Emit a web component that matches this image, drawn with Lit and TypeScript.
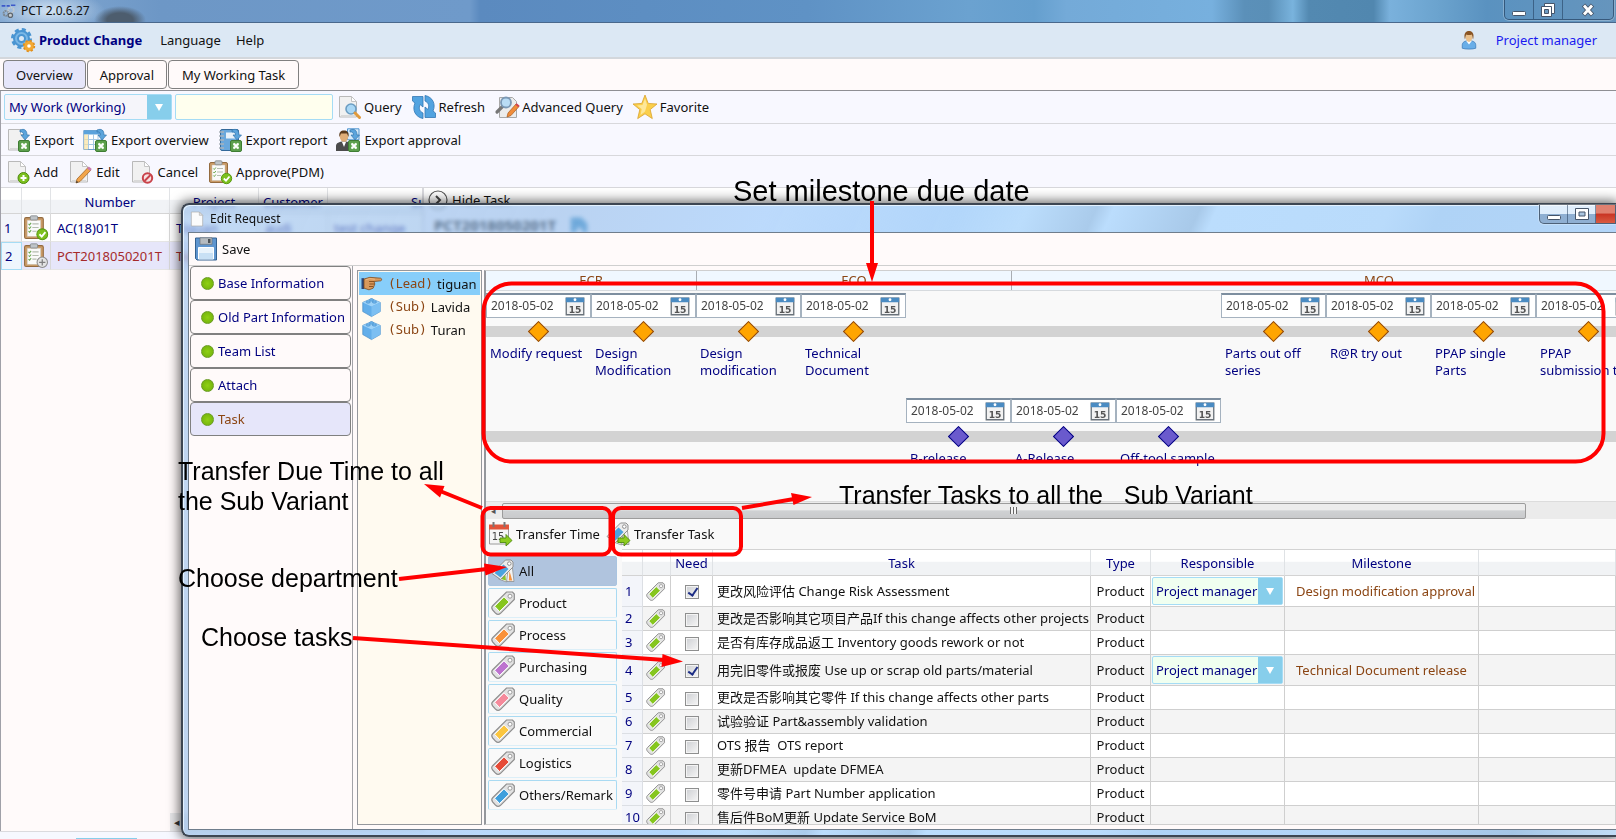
import { LitElement, html, svg, css, nothing } from "lit";
import { customElement, property } from "lit/decorators.js";
import { classMap } from "lit/directives/class-map.js";

const sheet = svg`<path d="M2.500 1.500h12l5 5v15.500h-17z" fill="#f1f1f1" stroke="#b9b9b9"/><path d="M14.500 1.500v5h5z" fill="#fff" stroke="#c4c4c4"/><path d="M4 21h14" stroke="#d9d9d9" stroke-width="2"/>`;
const excel = svg`<rect x="12.500" y="12.500" width="11" height="11" rx="1.500" fill="#5c9f4c" stroke="#3f7d33"/><path d="M15 15h6v6h-6z" fill="#82bd70"/><path d="M15.500 15.500l5 5M20.500 15.500l-5 5" stroke="#fff" stroke-width="1.800"/>`;
const swoop = svg`<path d="M14 2c5-2 7 1 7 5h2.500l-4.500 5-4-5h2.500c0-2-1-3.500-3.500-3z" fill="#5ba4dc" stroke="#3576ad" stroke-width=".7"/>`;
const board = svg`<rect x="1.500" y="2.500" width="18" height="20" rx="1.500" fill="#c99a66" stroke="#946b3f"/><rect x="4" y="5" width="13" height="15.500" fill="#fafafa" stroke="#c9c0b0" stroke-width=".5"/><rect x="7" y=".8" width="7" height="4" rx="1" fill="#bfc4c8" stroke="#84898d" stroke-width=".8"/><path d="M9 8.500h6M9 12h6M9 15.500h4" stroke="#b5bcb0"/><path d="M5.300 8.500l1 1 1.500-2M5.300 12l1 1 1.500-2M5.300 15.500l1 1 1.500-2" fill="none" stroke="#6aa84f"/>`;
const arrowGo = svg`<path d="M12 16h6v-3.500l6 6-6 5.500v-3.500h-6z" fill="#8ccb1f" stroke="#4e8a10" stroke-width=".9"/>`;
const fan = svg`<path d="M17 4l4 1 2 17.500h-7l-3-10z" fill="#f3f3f3" stroke="#8f8f8f" stroke-width=".8"/><path d="M18.500 12l2.800 9.500h-3.500z" fill="#f59342"/><path d="M14 8l3 3-1.500 12-8-3z" fill="#f3f3f3" stroke="#8f8f8f" stroke-width=".8"/><path d="M14 13l1 8.500-5-1.500z" fill="#8ac426"/><path d="M14.500 1H20l2 2v5L9.500 20.500 1 14.500z" fill="#ececec" stroke="#8f8f8f"/><path d="M12.500 5.500l5 4.500-8 8.500-6-4.500z" fill="#4ba3df"/><circle cx="18.300" cy="4.600" r="1.800" fill="#fff" stroke="#8f8f8f"/>`;

const tag = (c: string) => svg`<path d="M15.500 1h6l1.800 2v5.500L9.500 22.300c-1.500 1.300-3.500 1.200-4.800 0L1.700 19c-1.100-1.300-1.200-3 0-4.300z" fill="#e2e2e2" stroke="#8e8e8e" stroke-width="1.200"/><path d="M13 5.800l5.200 5.200L8.500 20.500 3.600 15.300z" fill=${c} stroke="#fff" stroke-width="1"/><circle cx="19" cy="5.200" r="2" fill="#fff" stroke="#9a9a9a"/>`;

const ICONS: Record<string, unknown> = {
  gears: svg`<circle cx="10.500" cy="10.500" r="5.500" fill="none" stroke="#4a95d2" stroke-width="6"/><circle cx="10.500" cy="10.500" r="9" fill="none" stroke="#4a95d2" stroke-width="3" stroke-dasharray="4 3.070"/><circle cx="10.500" cy="10.500" r="5.500" fill="none" stroke="#7ab7e6" stroke-width="2"/><circle cx="18" cy="18" r="3.500" fill="#fff" stroke="#f3a933" stroke-width="3.400"/><circle cx="18" cy="18" r="5.400" fill="none" stroke="#e08e1b" stroke-width="1.600" stroke-dasharray="2.200 2.040"/>`,
  app: svg`<circle cx="8" cy="15" r="4" fill="none" stroke="#7d8790" stroke-width="3" stroke-dasharray="3 1"/><circle cx="16" cy="10" r="4.500" fill="none" stroke="#c2c8ce" stroke-width="3" stroke-dasharray="3 1"/><circle cx="15" cy="18" r="3.500" fill="#c7ccd1" stroke="#5d666e" stroke-width="2"/><path d="M1 3h6M9 3h5M16 2h7" stroke="#3d59c9" stroke-width="2.500"/>`,
  user: svg`<path d="M3 23v-4c0-4 3-6 9-6s9 2 9 6v4c-4 1.500-14 1.500-18 0z" fill="#69aee8" stroke="#3b7ab8"/><path d="M8 13l4 5 4-5z" fill="#fff"/><ellipse cx="12" cy="8" rx="4.500" ry="6.500" fill="#e9c08c"/><path d="M6.500 11C4.500 3 8 0 12 0s7.500 3 5.500 11c-1-1-.5-5-2-6.500-2 1-5 1-7 0-1.500 1.500-1 5.500-2 6.500z" fill="#8a5524"/>`,
  query: svg`${sheet}<circle cx="14" cy="14" r="5" fill="#a9d7f5" stroke="#6b9dc2" stroke-width="1.600"/><path d="M18 18l4.500 4.500" stroke="#e09a3c" stroke-width="3" stroke-linecap="round"/>`,
  refresh: svg`<path d="M11 23.500C3 22 0 14.500 3 8L.5 6V1.500H11V12L8 9.500C6.500 13 7.500 16.500 11 18z" fill="#52a3e0" stroke="#3277b4" stroke-width=".8"/><path d="M13 .5c8 1.500 11 9 8 15.500l2.500 2v4.500H13V12l3 2.500c1.500-3.500.5-7-3-8.500z" fill="#52a3e0" stroke="#3277b4" stroke-width=".8"/>`,
  advanced: svg`<path d="M4.500 2.500h13l4 4v16h-17z" fill="#ececec" stroke="#a8a8a8"/><path d="M8 11L2 17" stroke="#777" stroke-width="3.200" stroke-linecap="round"/><circle cx="11" cy="7.500" r="5" fill="#b9dcf5" stroke="#7b98b5" stroke-width="1.800"/><path d="M12 22l1-4 8-9 3 2.500-8 9z" fill="#f08c3a" stroke="#a85a1c" stroke-width=".7"/><path d="M21 9l3 2.500" stroke="#d2434f" stroke-width="2"/>`,
  star: svg`<path d="M12 0l3.200 8.400 8.800.6-6.800 5.600 2.100 9L12 18.800l-7.300 4.800 2.100-9L0 9l8.800-.6z" fill="#fbcf4b" stroke="#d9a22d" stroke-width=".8"/><path d="M12 3.500l2 6.200-2 6.800-4.500 3.400 1.200-6L4 10.500l5.500-.5z" fill="#fde79a"/>`,
  export: svg`${sheet}${swoop}${excel}`,
  exportOverview: svg`<path d="M.8 2.500h19v19H.8z" fill="#fff" stroke="#6f9fc9"/><path d="M.8 2.500h19v4H.8z" fill="#5aa2dc"/><path d="M1 11.500h18M1 16.500h18M5.500 6v15M10.500 6v15M15 6v15" stroke="#a6c8e4"/><path d="M1 6.500h4v15H1z" fill="#f9e3a1" opacity=".7"/>${swoop}${excel}`,
  exportReport: svg`<rect x="2.500" y="1.500" width="18" height="21" rx="1.500" fill="#6aa8dc" stroke="#34699a"/><path d="M8 4.500h10v6H8z" fill="#e9f2fa"/><path d="M1 4h5M1 8h5M1 12h5M1 16h5M1 20h5" stroke="#aab2ba" stroke-width="1.600"/>${swoop}${excel}`,
  exportApproval: svg`<path d="M11.500 .8h11.500v11H11.500z" fill="#d7ebfa" stroke="#4f94cf"/><path d="M0 23v-5c0-3 3-4.500 8-4.500s8 1.500 8 4.500v5z" fill="#4c4c4c"/><path d="M6 14l2 5 2-5z" fill="#fff"/><ellipse cx="8" cy="8.500" rx="4.200" ry="5.200" fill="#e0ae78"/><path d="M3.500 9C2.500 4 5 2.500 8 2.500S13.500 4 12.500 9l-1.500-3.500H5z" fill="#5a3a1c"/>${swoop}${excel}`,
  add: svg`${sheet}<circle cx="17.500" cy="18" r="5.500" fill="#7cc01e" stroke="#4f8a0f"/><path d="M17.500 15v6M14.500 18h6" stroke="#fff" stroke-width="2"/>`,
  edit: svg`${sheet}<path d="M8 23l1-4L20 7.500l3 2.500L12 21.500z" fill="#f2a54a" stroke="#a2672a" stroke-width=".8"/><path d="M20 7.500l3 2.500" stroke="#c77bb0" stroke-width="2.500"/><path d="M8 23l.7-2.300 1.600 1.500z" fill="#333"/>`,
  cancel: svg`${sheet}<circle cx="17.500" cy="18" r="4.700" fill="#f7e3e3" stroke="#c9434b" stroke-width="2"/><path d="M14.500 21l6-6" stroke="#c9434b" stroke-width="2"/>`,
  approve: svg`${board}<circle cx="18.500" cy="18.500" r="5.200" fill="#7cc01e" stroke="#5a9a12"/><path d="M15.800 18.500l2.200 2.200 3.500-4.200" fill="none" stroke="#fff" stroke-width="1.800"/>`,
  pending: svg`${board}<circle cx="18.500" cy="18.500" r="5" fill="#e4e4e4" stroke="#8c8c8c"/><path d="M18.500 15.500v6M15.500 18.500h6" stroke="#7f7f7f" stroke-width="1.200"/>`,
  page: svg`<path d="M3.500 1.500h12l5 5v16h-17z" fill="#fbfbfb" stroke="#a9a9a9"/><path d="M15.500 1.500v5h5z" fill="#e4e4e4" stroke="#b0b0b0"/>`,
  save: svg`<path d="M2 1h20.500v22H3l-1.500-1.500V1z" fill="#5f95cf" stroke="#35618f"/><path d="M6 .8h12v6.500H6z" fill="#b6bbc0" stroke="#6f7479" stroke-width=".7"/><path d="M14 2h2.500v4H14z" fill="#4d5257"/><path d="M4.500 10.500h15V22h-15z" fill="#e9f3fc" stroke="#fff"/><path d="M5 16h14v6H5z" fill="#c8e0f5"/>`,
  truck: svg`<path d="M1 2h14l8 8v12h-7v-6H9v6H1z" fill="#3d8fc4"/>`,
  hand: svg`<path d="M0 5l3 0v13H0z" fill="#2d4778"/><path d="M3 6l7-2 13 1c1.500.2 1.500 3 0 3.200L15 9l1 3-2 5-5 2-6-2z" fill="#d9995c" stroke="#7a4517" stroke-width=".9"/><path d="M9 9h6M9.500 12h6M9 15h5" stroke="#7a4517"/><path d="M5 7l5-1.500 6 .8" stroke="#efc08d" fill="none"/>`,
  brick: svg`<path d="M12 2l10.500 4.500v11L12 23.500 1.500 17.500v-11z" fill="#62aeea" stroke="#4188c4" stroke-width=".8"/><path d="M12 2l10.500 4.500L12 11.500 1.500 6.500z" fill="#9ed2f8"/><path d="M12 11.500l10.500-5v11L12 23.500z" fill="#7cbff2"/><ellipse cx="8" cy="6" rx="2.600" ry="1.500" fill="#6db4ec" stroke="#4188c4" stroke-width=".6"/><ellipse cx="15.500" cy="6" rx="2.600" ry="1.500" fill="#6db4ec" stroke="#4188c4" stroke-width=".6"/><ellipse cx="12" cy="3.500" rx="2.600" ry="1.500" fill="#6db4ec" stroke="#4188c4" stroke-width=".6"/>`,
  calendar: svg`<path d="M1.500 2.500h21v20h-21z" fill="#f2f2f2" stroke="#6a727a" stroke-width="1.600"/><path d="M1 2h22v5.500H1z" fill="#4a8bc2"/><circle cx="12" cy="4.500" r="1.700" fill="#fff"/><text x="12" y="20" text-anchor="middle" font-family="DejaVu Sans" font-weight="700" font-size="11" fill="#555">15</text>`,
  transferTime: svg`<path d="M1.500 3.500h19v18.500h-19z" fill="#f5f5f5" stroke="#9a9a9a"/><path d="M1 2.500h20v5H1z" fill="#e2543a"/><path d="M5.500 0v5M16.500 0v5" stroke="#777" stroke-width="2"/><text x="10" y="18" text-anchor="middle" font-family="DejaVu Sans" font-size="10" fill="#444">15</text>${arrowGo}`,
  transferTask: svg`${fan}${arrowGo}`,
  fan,
  green: tag("#86c61f"),
  orange: tag("#f9913a"),
  purple: tag("#bd73cf"),
  pink: tag("#f58a9b"),
  yellow: tag("#fbc640"),
  red: tag("#e64b37"),
  blue: tag("#3f9fdc"),
};

@customElement("pct-icon")
export class PctIcon extends LitElement {
  @property() name = "page";
  static styles = css`
    :host { display: inline-block; flex: none; width: 24px; height: 24px; }
    svg { display: block; width: 100%; height: 100%; overflow: visible; }
  `;
  render() {
    return html`<svg viewBox="0 0 24 24" aria-hidden="true">${ICONS[this.name]}</svg>`;
  }
}

interface Milestone { title: string; col: number; }
const RELEASES: Milestone[] = [
  { title: "Modify request", col: 0 },
  { title: "Design Modification", col: 1 },
  { title: "Design modification", col: 2 },
  { title: "Technical Document", col: 3 },
  { title: "Parts out off series", col: 7 },
  { title: "R@R try out", col: 8 },
  { title: "PPAP single Parts", col: 9 },
  { title: "PPAP submission to", col: 10 },
];
const GATES: Milestone[] = [
  { title: "B-release", col: 4 },
  { title: "A-Release", col: 5 },
  { title: "Off-tool sample", col: 6 },
];
const COLUMNS = 14;

const TASKS: { text: string; owner?: string; milestone?: string }[] = [
  { text: "更改风险评估 Change Risk Assessment", owner: "Project manager", milestone: "Design modification approval" },
  { text: "更改是否影响其它项目产品If this change affects other projects" },
  { text: "是否有库存成品返工 Inventory goods rework or not" },
  { text: "用完旧零件或报废 Use up or scrap old parts/material", owner: "Project manager", milestone: "Technical Document release" },
  { text: "更改是否影响其它零件 If this change affects other parts" },
  { text: "试验验证 Part&assembly validation" },
  { text: "OTS 报告  OTS report" },
  { text: "更新DFMEA  update DFMEA" },
  { text: "零件号申请 Part Number application" },
  { text: "售后件BoM更新 Update Service BoM" },
];

const DEPARTMENTS: [string, string][] = [
  ["fan", "All"], ["green", "Product"], ["orange", "Process"], ["purple", "Purchasing"],
  ["pink", "Quality"], ["yellow", "Commercial"], ["red", "Logistics"], ["blue", "Others/Remark"],
];

@customElement("app-root")
export class AppRoot extends LitElement {
  static styles = css`
    :host {
      display: block; position: relative; height: 100vh; overflow: hidden;
      font: 13px/18px "Noto Sans", "Noto Sans CJK SC", sans-serif; color: #111;
    }
    * { box-sizing: border-box; }
    button, input, select { font: inherit; color: inherit; margin: 0; padding: 0; background: none; border: 0; outline: 0; border-radius: 0; }
    button { cursor: pointer; text-align: left; white-space: nowrap; }
    a { text-decoration: none; }
    table { border-collapse: separate; border-spacing: 0; table-layout: fixed; }
    th { font-weight: 400; }

    .shell { display: flex; flex-direction: column; height: 100%; background: #fffafa; }
    .titlebar {
      flex: none; display: flex; align-items: center; gap: 5px; height: 23px; padding-left: 1px;
      border-bottom: 1px solid #49688c; font-size: 12px;
      background:
        radial-gradient(ellipse 55px 20px at 50px 11px, rgba(225, 238, 250, .85), rgba(225, 238, 250, 0)),
        radial-gradient(ellipse 26px 14px at 120px 20px, #4d5d6e 50%, rgba(60, 83, 108, 0)),
        linear-gradient(90deg, #86abd3 0, #6d97c6 160px, #6f9aca 470px, #5b8abf 480px, #5f92c5 50%, #6ba2d0 60%, #659fce 64%, #74aad8 66%, #77b0de 75%, #5b90b9 77%, #5a8fb7 78.500%, #79b3dd 80%, #5389b1 81%, #5187af 85%, #7ab1dc 86%, #6ba3ce 89%, #5a92c0 92%, #6695bd 100%);
    }
    .titlebar pct-icon { width: 15px; height: 15px; }
    .grow { flex: 1; }
    .winbtns { display: flex; align-self: flex-start; height: 20px; margin-right: 2px; border: 1px solid rgba(25, 50, 80, .6); border-top: 0; border-radius: 0 0 5px 5px; box-shadow: 0 0 0 1px rgba(255, 255, 255, .25); }
    .winbtns button { display: grid; place-items: center; width: 29px; border-right: 1px solid rgba(25, 50, 80, .5); }
    .winbtns button:last-child { width: 50px; border-right: 0; }
    .winbtns svg { display: block; width: 16px; height: 14px; }

    .menubar { flex: none; display: flex; align-items: center; height: 36px; padding: 0 19px 0 11px; background: #dce8f4; border-bottom: 2px solid #d3d7dc; }
    .menubar button { margin-right: 15px; }
    .menubar .brand { display: flex; align-items: center; gap: 4px; margin-right: 18px; font-weight: 700; color: #000080; }
    .menubar .who { width: 18px; height: 18px; margin-right: 18px; }
    .menubar a { color: #1a1af0; }

    .tabs { flex: none; display: flex; gap: 1px; height: 32px; padding: 1px 3px 0; border-bottom: 1px solid #8f8f94; }
    .tabs button { height: 29px; padding: 0 12px; border: 1px solid #808080; border-radius: 4px; background: #fffafa; }
    .tabs button:last-child { padding: 0 13px; }
    .tabs .on { background: #e6e6fa; }

    .work { flex: 1; min-height: 0; display: flex; flex-direction: column; border-left: 1px solid #a0a0a8; }
    .toolbar { flex: none; display: flex; align-items: center; gap: 9px; height: 32px; padding: 0 5px; background: #f8f8ff; border-bottom: 1px solid #d8d8dc; }
    .toolbar.search { height: 33px; padding-left: 3px; gap: 10px; }
    .toolbar.edit { gap: 10px; }
    .tool { display: flex; align-items: center; gap: 4px; }
    .combo { display: flex; height: 26px; border: 1px solid #a5dcf5; border-radius: 2px; background: #f5f5fa; color: #000080; }
    .combo select { flex: 1; min-width: 0; padding-left: 4px; appearance: none; }
    .combo i { flex: none; width: 24px; display: grid; place-items: center; background: #87ceeb; }
    .combo i::before { content: ""; border: 4px solid transparent; border-top: 7px solid #fff; border-bottom: 0; }
    .fields { display: flex; gap: 3px; }
    .search .combo { width: 168px; }
    .search input { width: 158px; height: 26px; padding: 0 4px; border: 1px solid #a5dcf5; border-radius: 2px; background: #ffffee; }
    .search .tool { gap: 3px; }
    .fields + .tool { margin-left: -6px; }

    .split { flex: 1; min-height: 0; display: flex; }
    .requests { flex: none; width: 423px; display: flex; flex-direction: column; overflow: hidden; border-right: 2px solid #d9d9de; }
    .requests table { width: 539px; color: #000080; }
    .requests th { height: 26px; padding: 2px 0 0; background: linear-gradient(#fff 45%, #f1f3f6 50%); border-right: 1px solid #e1e3e6; border-bottom: 1px solid #d5d5d5; }
    .requests td { height: 28px; padding: 0 6px; background: #fff; border-right: 1px solid #d9d9d9; border-bottom: 1px solid #e5e5e5; white-space: nowrap; overflow: hidden; }
    .requests td:first-child { padding: 0 3px; background: #f3f5fa; }
    .requests td:nth-child(2) { padding: 0 0 0 1px; }
    .requests pct-icon { display: block; width: 25px; height: 25px; }
    .requests .sel td { background: #e6e6fa; color: #a52a2a; }
    .requests .sel td:first-child { background: #eef6fd; color: #000080; border: 1px solid #a5dcf5; }
    .hbar { margin: auto 0 0 169px; height: 18px; padding-left: 4px; background: #e8e8ea; color: #333; font-size: 11px; line-height: 17px; }
    .detail { flex: 1; background: linear-gradient(#fff 15px, #f8f8ff 15px); }
    .hide { display: flex; align-items: center; gap: 4px; height: 24px; padding-left: 4px; }
    .hide svg { width: 20px; height: 20px; }
    .detail .head { display: flex; align-items: center; gap: 12px; padding: 4px 10px; font-size: 15px; font-weight: 700; color: #000; }
    .detail .head pct-icon { width: 22px; height: 18px; }
    .status { flex: none; height: 8px; padding-top: 6px; background: #f6f8ff; border-top: 1px solid #dadade; }
    .status div { width: 61px; height: 1px; margin-left: 76px; background: #87ceeb; }

    .dialog {
      position: absolute; left: 181px; top: 203px; right: 0; bottom: 2px; display: flex; flex-direction: column;
      padding: 0 0 5px 5px; border: 2px solid #3d4652; border-right: 0; border-radius: 8px 0 0 8px;
      background: linear-gradient(115deg, rgba(160, 196, 238, .65) 0, rgba(145, 186, 232, .6) 22%, rgba(148, 198, 250, .6) 34%, rgba(170, 210, 250, .9) 45%, #bbddfc 49%, #aacbeb 53%, #bbddfd 54%, #a8c9e9 59%, #bbddfd 60%, #b9dbfb 70%, #afd3f6 73%, #b3d5f8 84%, #a5c6e6 94%, #c2ddf6 100%);
      backdrop-filter: blur(2px);
      box-shadow: 0 0 12px 2px rgba(0, 0, 0, .6), inset 1px 1px 0 #e4f2ff;
    }
    .dialog > header { flex: none; display: flex; align-items: center; gap: 5px; height: 27px; font-size: 12px; }
    .dialog > header pct-icon { width: 16px; height: 16px; margin-left: 1px; }
    .dialog .winbtns { height: 19px; margin-right: 0; border-color: #4d6178; background: linear-gradient(rgba(255, 255, 255, .6) 50%, rgba(120, 150, 185, .6) 50%); border-radius: 0 0 0 5px; }
    .dialog .winbtns button { width: 28px; }
    .dialog .winbtns .close { width: 19px; background: linear-gradient(#e0806f 45%, #c93423 50%, #d95b42); }
    .content { flex: 1; min-height: 0; display: flex; flex-direction: column; border: 1px solid #6f7d8c; border-right: 0; background: #fffafa; }
    .savebar { flex: none; height: 33px; padding: 0 5px; display: flex; align-items: center; border-bottom: 1px solid #cfcfcf; }
    .panes { flex: 1; min-height: 0; display: flex; }
    .nav { flex: none; width: 164px; padding: 0 1px; display: flex; flex-direction: column; border-right: 1px solid #a3a3a8; }
    .nav button { display: flex; align-items: center; gap: 4px; height: 34px; padding-left: 10px; color: #000080; border: 1px solid #808080; border-radius: 4px; }
    .nav button::before { content: ""; width: 11px; height: 11px; border-radius: 50%; background: radial-gradient(#8fd014, #6fae0c); border: 1px solid #6a9c25; }
    .nav .on { background: #e6e6fa; color: #8b4513; }
    .variants { flex: none; width: 125px; margin: 4px 0 4px 4px; padding: 1px; border: 1px solid #95979c; background: #fffaf0; }
    .variants button { display: flex; align-items: center; width: 100%; height: 23px; padding-left: 2px; }
    .variants .on { background: #87cefa; }
    .variants pct-icon { width: 21px; height: 20px; margin-right: 6px; }
    .variants em { font-style: normal; color: #8b4513; margin-right: 4px; font-family: "DejaVu Sans Mono"; }
    .variants em span { font-family: "Noto Sans"; }

    .main { flex: 1; min-width: 0; margin: 4px 0 4px 2px; display: flex; flex-direction: column; border: 1px solid #cfcfcf; border-left: 2px solid #95979c; border-right: 0; background: #f9f9f9; }
    .phases { flex: none; display: grid; grid-template-columns: 210px 315px 735px; height: 20px; overflow: hidden; background: #f0f8ff; color: #8b4513; text-align: center; border-bottom: 1px solid #d6dade; line-height: 19px; }
    .phases div + div { border-left: 1px solid #a9adb2; }
    .timeline { flex: none; height: 210px; padding-top: 2px; overflow: hidden; }
    .lane { display: grid; grid-template-columns: repeat(14, 105px); height: 105px; }
    .stop { display: grid; grid-template-columns: minmax(0, 1fr); grid-template-rows: 25px 21px auto; row-gap: 3px; align-content: start; }
    .date { display: flex; align-items: center; border: 1px solid #a5b2bf; border-top: 2px solid #7d8e9f; background: #fff; padding: 0 5px 0 4px; color: #444; font-size: 12px; }
    .date input { flex: 1; min-width: 0; }
    .date button, .date pct-icon { display: block; width: 20px; height: 20px; }
    .track { grid-row: 2; display: grid; place-items: center; background: linear-gradient(transparent 5px, #d3d3d3 5px, #d3d3d3 16px, transparent 16px); }
    .track i { width: 15px; height: 15px; rotate: 45deg; background: #ffa500; border: 1px solid #8b4513; }
    .gate .track i { background: #6a5acd; border-color: #000080; }
    .stop label { padding-left: 4px; line-height: 17px; color: #000080; }
    .scroll { flex: none; display: flex; align-items: center; height: 18px; padding-left: 5px; background: #ebebeb; border-top: 1px solid #dcdcdc; font-size: 9px; color: #555; }
    .scroll div { width: 91%; height: 16px; margin-left: 6px; display: grid; place-items: center; border: 1px solid #9c9c9c; border-radius: 2px; background: linear-gradient(#ececec 40%, #cfd1d3 50%, #c9cacc); }
    .scroll b { width: 7px; height: 7px; background: repeating-linear-gradient(90deg, #666 0 1px, #f4f4f4 1px 3px); }
    .transfer { flex: none; display: flex; align-items: center; gap: 6px; height: 30px; padding-left: 2px; }

    .lower { flex: 1; min-height: 0; display: flex; gap: 5px; overflow: hidden; }
    .depts { flex: none; width: 131px; padding: 7px 0 0 2px; display: flex; flex-direction: column; gap: 2px; }
    .depts button { display: flex; align-items: center; gap: 4px; height: 30px; padding-left: 2px; border: 1px solid #a9daf2; border-bottom-color: #dceff8; border-radius: 2px; }
    .depts .on { background: #b0c4de; border-color: #a9c4e0; }
    .grid { flex: 1; min-width: 0; overflow: hidden; border-top: 1px solid #d3d3d3; }
    .grid table { width: 100%; }
    .grid th { height: 26px; color: #000080; background: linear-gradient(#fff 45%, #f1f3f5 50%); border-right: 1px solid #dfe2e5; border-bottom: 1px solid #d3d3d3; padding: 0; }
    .grid td { height: 24px; padding: 0 0 0 4px; white-space: pre; border-right: 1px solid #cfcfcf; border-bottom: 1px solid #cfcfcf; background: #fff; overflow: hidden; line-height: 17px; }
    .grid tr:nth-child(even) td { background: #f4f4f4; }
    .grid .tall td { height: 31px; }
    .grid tr td:first-child { color: #000080; background: #f3f5fa; padding-left: 3px; border-color: #dcdfe4; }
    .grid td:nth-child(2) { padding-left: 3px; }
    .grid td:nth-child(2) pct-icon { display: block; width: 19px; height: 19px; }
    .grid td:nth-child(3) { padding: 0; text-align: center; }
    .grid td:nth-child(5) { padding: 0; text-align: center; }
    .grid td:nth-child(6) { padding: 0 1px; }
    .grid td:nth-child(7) { padding-left: 11px; color: #8b4513; }
    .grid .combo { background: #f0fff0; height: 28px; }
    .grid .combo select { padding-left: 3px; }
    .grid input { appearance: none; display: inline-block; vertical-align: middle; width: 14px; height: 14px; border: 1px solid #8e8f8f; background: linear-gradient(135deg, #cdcfd3, #f6f6f6); box-shadow: inset 0 0 0 1px #f4f4f4; }
    .grid input:checked::after { content: ""; display: block; width: 4px; height: 8px; margin: 0 0 0 4px; border: solid #1c2d85; border-width: 0 2px 2px 0; transform: rotate(35deg); }

    .notes { position: absolute; inset: 0; pointer-events: none; overflow: hidden; }
    .notes svg { width: 100%; height: 100%; display: block; }
    .notes p { position: absolute; margin: 0; white-space: pre; color: #000; font: 25px/30px "Liberation Sans", sans-serif; }
    .notes .n1 { left: 733px; top: 176px; font-size: 29px; }
    .notes .n2 { left: 178px; top: 456px; }
    .notes .n3 { left: 839px; top: 480px; }
    .notes .n4 { left: 178px; top: 563px; }
    .notes .n5 { left: 201px; top: 622px; }
  `;

  private tool(icon: string, text: string) {
    return html`<button class="tool"><pct-icon name=${icon}></pct-icon>${text}</button>`;
  }

  private minGlyph = svg`<rect x="1.500" y="8.500" width="13" height="4" rx="1" fill="#fff" stroke="#46556a"/>`;

  private lane(items: Milestone[], kind: string) {
    const byCol = new Map(items.map((m) => [m.col, m]));
    return html`<div class="lane ${kind}">
      ${Array.from({ length: COLUMNS }, (_, c) => {
        const m = byCol.get(c);
        const id = `${kind}-${c}`;
        return html`<div class="stop">
          ${m ? html`<div class="date"><input id=${id} type="text" .value=${"2018-05-02"} /><button aria-label="Pick date"><pct-icon name="calendar"></pct-icon></button></div>` : nothing}
          <div class="track">${m ? html`<i></i>` : nothing}</div>
          ${m ? html`<label for=${id}>${m.title}</label>` : nothing}
        </div>`;
      })}
    </div>`;
  }

  private mainWindow() {
    return html`<div class="shell">
      <div class="titlebar">
        <pct-icon name="app"></pct-icon><span>PCT 2.0.6.27</span><span class="grow"></span>
        <div class="winbtns">
          <button aria-label="Minimize"><svg viewBox="0 0 16 14">${this.minGlyph}</svg></button>
          <button aria-label="Restore"><svg viewBox="0 0 16 14"><path d="M4.500.5h10v10h-10z" fill="#fff" stroke="#46556a"/><path d="M1.500 3.500h10v10h-10z" fill="#fff" stroke="#46556a"/><path d="M4.500 6.500h4v4h-4z" fill="#6d9cc4" stroke="#46556a"/></svg></button>
          <button aria-label="Close"><svg viewBox="0 0 16 14"><path d="M3.500 2l9 10M12.500 2l-9 10" stroke="#46556a" stroke-width="4.500"/><path d="M4 2.500l8 9M12 2.500l-8 9" stroke="#fff" stroke-width="2.800"/></svg></button>
        </div>
      </div>
      <nav class="menubar">
        <button class="brand"><pct-icon name="gears"></pct-icon>Product Change</button>
        <button>Language</button><button>Help</button><span class="grow"></span>
        <pct-icon class="who" name="user"></pct-icon><a href="#">Project manager</a>
      </nav>
      <div class="tabs"><button class="on">Overview</button><button>Approval</button><button>My Working Task</button></div>
      <div class="work">
        <div class="toolbar search">
          <div class="fields">
            <div class="combo"><select aria-label="Work list"><option>My Work (Working)</option></select><i></i></div>
            <input type="text" aria-label="Search text" />
          </div>
          ${this.tool("query", "Query")}${this.tool("refresh", "Refresh")}${this.tool("advanced", "Advanced Query")}${this.tool("star", "Favorite")}
        </div>
        <div class="toolbar">
          ${this.tool("export", "Export")}${this.tool("exportOverview", "Export overview")}${this.tool("exportReport", "Export report")}${this.tool("exportApproval", "Export approval")}
        </div>
        <div class="toolbar edit">
          ${this.tool("add", "Add")}${this.tool("edit", "Edit")}${this.tool("cancel", "Cancel")}${this.tool("approve", "Approve(PDM)")}
        </div>
        <div class="split">
          <div class="requests">
            <table>
              <colgroup><col style="width:21px" /><col style="width:29px" /><col style="width:119px" /><col style="width:89px" /><col style="width:69px" /><col style="width:212px" /></colgroup>
              <thead><tr><th></th><th></th><th>Number</th><th>Project</th><th>Customer</th><th>Subject</th></tr></thead>
              <tbody>
                <tr><td>1</td><td><pct-icon name="approve"></pct-icon></td><td>AC(18)01T</td><td>Tiguan</td><td>audi</td><td>test change</td></tr>
                <tr class="sel"><td>2</td><td><pct-icon name="pending"></pct-icon></td><td>PCT2018050201T</td><td>Tiguan</td><td></td><td></td></tr>
              </tbody>
            </table>
            <div class="hbar">◂</div>
          </div>
          <div class="detail">
            <button class="hide"><svg viewBox="0 0 20 20"><circle cx="10" cy="10" r="9" fill="#fff" stroke="#555" stroke-width="1.200"/><path d="M8 6l4 4-4 4" fill="none" stroke="#444" stroke-width="2"/></svg>Hide Task</button>
            <div class="head">PCT2018050201T<pct-icon name="truck"></pct-icon></div>
          </div>
        </div>
      </div>
      <div class="status"><div></div></div>
    </div>`;
  }

  private taskGrid() {
    return html`<div class="grid"><table>
      <colgroup><col style="width:21px" /><col style="width:28px" /><col style="width:42px" /><col style="width:378px" /><col style="width:60px" /><col style="width:134px" /><col style="width:194px" /><col /></colgroup>
      <thead><tr><th></th><th></th><th>Need</th><th>Task</th><th>Type</th><th>Responsible</th><th>Milestone</th><th></th></tr></thead>
      <tbody>
        ${TASKS.map((t, i) => html`<tr class=${classMap({ tall: !!t.owner })}>
          <td>${i + 1}</td>
          <td><pct-icon name="green"></pct-icon></td>
          <td><input type="checkbox" aria-label=${"Need: " + t.text} ?checked=${!!t.owner} /></td>
          <td>${t.text}</td>
          <td>Product</td>
          <td>${t.owner ? html`<div class="combo"><select aria-label="Responsible"><option>${t.owner}</option></select><i></i></div>` : nothing}</td>
          <td>${t.milestone ?? nothing}</td>
          <td></td>
        </tr>`)}
      </tbody>
    </table></div>`;
  }

  private dialog() {
    return html`<section class="dialog" role="dialog" aria-label="Edit Request">
      <header>
        <pct-icon name="page"></pct-icon><span>Edit Request</span><span class="grow"></span>
        <div class="winbtns">
          <button aria-label="Minimize"><svg viewBox="0 0 16 14">${this.minGlyph}</svg></button>
          <button aria-label="Maximize"><svg viewBox="0 0 16 14"><path d="M1.500 1.500h13v11h-13z" fill="#fff" stroke="#46556a"/><path d="M5 5h6v4H5z" fill="#a9c5e0" stroke="#46556a"/></svg></button>
          <button class="close" aria-label="Close"></button>
        </div>
      </header>
      <div class="content">
        <div class="savebar">${this.tool("save", "Save")}</div>
        <div class="panes">
          <nav class="nav">
            <button>Base Information</button><button>Old Part Information</button><button>Team List</button><button>Attach</button><button class="on">Task</button>
          </nav>
          <div class="variants">
            <button class="on"><pct-icon name="hand"></pct-icon><em>(<span>Lead</span>)</em>tiguan</button>
            <button><pct-icon name="brick"></pct-icon><em>(<span>Sub</span>)</em>Lavida</button>
            <button><pct-icon name="brick"></pct-icon><em>(<span>Sub</span>)</em>Turan</button>
          </div>
          <div class="main">
            <div class="phases"><div>ECR</div><div>ECO</div><div>MCO</div></div>
            <div class="timeline">${this.lane(RELEASES, "release")}${this.lane(GATES, "gate")}</div>
            <div class="scroll">◂<div><b></b></div></div>
            <div class="transfer">${this.tool("transferTime", "Transfer Time")}${this.tool("transferTask", "Transfer Task")}</div>
            <div class="lower">
              <div class="depts">${DEPARTMENTS.map(([icon, name], i) => html`<button class=${classMap({ on: i === 0 })}><pct-icon name=${icon}></pct-icon>${name}</button>`)}</div>
              ${this.taskGrid()}
            </div>
          </div>
        </div>
      </div>
    </section>`;
  }

  private notes() {
    return html`<div class="notes">
      <svg>
        <g fill="none" stroke="#f00" stroke-width="4">
          <rect x="483.500" y="283.500" width="1120" height="178" rx="28"/>
          <rect x="482.500" y="508" width="128" height="46.500" rx="8"/>
          <rect x="613" y="508" width="128" height="46.500" rx="8"/>
          <path d="M872 201v64M482 508l-42-17M742 508l52-9M399 579l88-10M353 638l312 22"/>
        </g>
        <path fill="#f00" d="M866 263h12l-6 19zM424 484l20.500 2-4.500 11.500zM812 497l-21-4 2.500 12zM507 567l-23-3.500 1.500 12zM683 661.500l-20.500-7.500-1 13z"/>
      </svg>
      <p class="n1">Set milestone due date</p>
      <p class="n2">Transfer Due Time to all
the Sub Variant</p>
      <p class="n3">Transfer Tasks to all the   Sub Variant</p>
      <p class="n4">Choose department</p>
      <p class="n5">Choose tasks</p>
    </div>`;
  }

  render() {
    return html`${this.mainWindow()}${this.dialog()}${this.notes()}`;
  }
}
